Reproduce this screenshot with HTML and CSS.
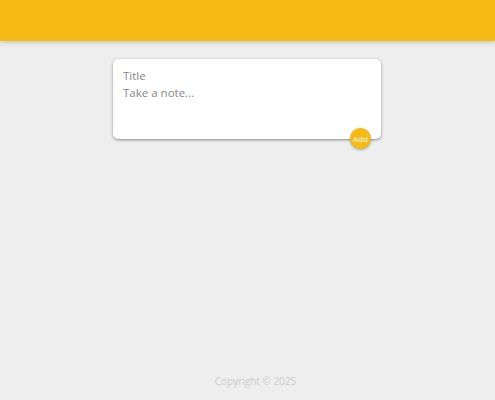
FILE: index.html
```html
<!DOCTYPE html>
<html>
<head>
<meta charset="utf-8">
<link rel="stylesheet" href="styles.css">
</head>
<body>
<header class="header"></header>
<main class="main">
  <form class="create-note">
    <input class="title-input" name="title" placeholder="Title">
    <textarea class="note-input" name="content" placeholder="Take a note..." rows="3"></textarea>
    <button class="add-btn" type="button">Add</button>
  </form>
</main>
<footer class="footer"><p class="copy">Copyright © 2025</p></footer>
</body>
</html>
```
FILE: styles.css
```css
html, body {
  margin: 0;
  padding: 0;
}
body {
  background: #eeeeee;
  font-family: "Open Sans", "Noto Sans", sans-serif;
  min-height: 100vh;
  display: flex;
  flex-direction: column;
  box-sizing: border-box;
}
.header {
  height: 41px;
  background: #f5ba13;
  box-shadow: 0 0 6px 0 rgba(0, 0, 0, 0.3);
  flex: none;
}
.main {
  display: flex;
  justify-content: center;
  padding-top: 18px;
  padding-right: 1px;
}
.create-note {
  position: relative;
  width: 268px;
  height: 80px;
  box-sizing: border-box;
  background: #fff;
  border-radius: 5px;
  box-shadow: 0 1px 3px rgb(138, 137, 137);
  padding: 8px 7px 7px;
  display: flex;
  flex-direction: column;
  margin: 0;
}
.title-input, .note-input {
  border: none;
  outline: none;
  padding: 0 3px;
  font-family: inherit;
  font-size: 11.5px;
  line-height: 18px;
  color: #333;
  background: transparent;
  resize: none;
}
.title-input {
  height: 17px;
  line-height: 17px;
}
.note-input {
  height: 40px;
}
.title-input::placeholder, .note-input::placeholder {
  color: #888888;
}
.add-btn {
  position: absolute;
  right: 10px;
  bottom: -10px;
  width: 21px;
  height: 21px;
  border-radius: 50%;
  border: none;
  background: #f5ba13;
  color: #fff;
  font-family: inherit;
  font-size: 8px;
  padding: 0;
  box-shadow: 0 1px 3px rgba(0, 0, 0, 0.3);
  cursor: pointer;
}
.footer {
  margin-top: auto;
  text-align: center;
  padding-bottom: 12px;
  padding-left: 16px;
}
.copy {
  margin: 0;
  font-size: 10px;
  line-height: 13px;
  color: #cccccc;
}
```
